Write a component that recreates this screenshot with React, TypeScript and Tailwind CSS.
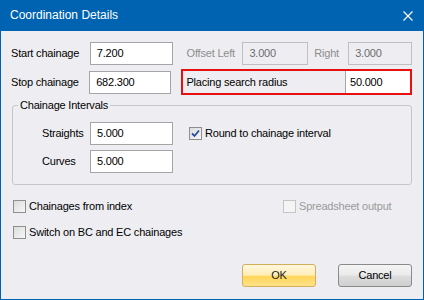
import React from 'react';

const font = { fontFamily: '"Liberation Sans", Arial, sans-serif' };

function TextBox({ value, width, disabled }: { value: string; width: string; disabled?: boolean }) {
  return (
    <div
      className={`${width} h-[23px] flex items-center pl-[6px] border ${
        disabled ? 'border-[#BFBFBF] text-[#6D6D6D] bg-transparent' : 'border-[#A5A5A5] text-black bg-white'
      }`}
    >
      {value}
    </div>
  );
}

function CheckBox({ label, checked, disabled }: { label: string; checked?: boolean; disabled?: boolean }) {
  return (
    <div className="flex items-center h-[13px]">
      <span
        className={`w-[13px] h-[13px] border flex items-center justify-center ${
          disabled
            ? 'border-[#C4C4C4] bg-[#F4F4F4]'
            : 'border-[#8E8F8F] bg-gradient-to-br from-[#DCDCDC] to-[#F7F7F7]'
        }`}
      >
        {checked && (
          <svg width="9" height="9" viewBox="0 0 9 9">
            <path d="M1 4.5 L3.5 7 L8 1.5" fill="none" stroke="#2A4C9F" strokeWidth="1.8" />
          </svg>
        )}
      </span>
      <span className={`ml-[3px] ${disabled ? 'text-[#9A9A9A]' : 'text-black'}`}>{label}</span>
    </div>
  );
}

export default function App() {
  return (
    <div
      className="w-[424px] h-[300px] flex flex-col bg-[#0063B1] text-[11px] tracking-[-0.2px] leading-[13px]"
      style={font}
    >
      {/* Title bar */}
      <div className="h-[31px] flex items-center justify-between pl-[10px] pr-[11px] shrink-0">
        <span className="text-white text-[12px] tracking-normal">Coordination Details</span>
        <svg width="10" height="10" viewBox="0 0 10 10">
          <path d="M0.5 0.5 L9.5 9.5 M9.5 0.5 L0.5 9.5" stroke="white" strokeWidth="1.2" />
        </svg>
      </div>

      {/* Body */}
      <div className="flex-1 mx-[1px] mb-[1px] bg-[#EEEEF2] flex flex-col pl-[10px] pr-[11px]">
        {/* Row 1 */}
        <div className="mt-[11px] flex items-center h-[23px]">
          <span className="w-[79px]">Start chainage</span>
          <TextBox value="7.200" width="w-[83px]" />
          <span className="ml-[14px] w-[56px] text-[#8D8D8D]">Offset Left</span>
          <TextBox value="3.000" width="w-[66px]" disabled />
          <span className="ml-[6px] w-[34px] text-[#8D8D8D]">Right</span>
          <TextBox value="3.000" width="w-[64px]" disabled />
        </div>

        {/* Row 2 */}
        <div className="mt-[4px] flex items-center h-[26px]">
          <span className="w-[79px]">Stop chainage</span>
          <TextBox value="682.300" width="w-[83px]" />
          <div className="ml-[10px] w-[233px] h-[26px] border-2 border-[#E81010] flex items-center">
            <span className="flex-1 pl-[3px]">Placing search radius</span>
            <div className="w-[65px] h-full bg-white border-l border-[#A5A5A5] flex items-center pl-[4px]">
              50.000
            </div>
          </div>
        </div>

        {/* Group */}
        <fieldset className="mt-[4px] ml-[1px] w-[400px] border border-[#C6C6C6] rounded-[3px]">
          <legend className="ml-[5px] px-[2px]">Chainage Intervals</legend>
          <div className="pl-[29px] pt-[10px] pb-[11px]">
            <div className="flex items-center h-[23px]">
              <span className="w-[48px]">Straights</span>
              <TextBox value="5.000" width="w-[83px]" />
              <div className="ml-[16px]">
                <CheckBox label="Round to chainage interval" checked />
              </div>
            </div>
            <div className="mt-[5px] flex items-center h-[23px]">
              <span className="w-[48px]">Curves</span>
              <TextBox value="5.000" width="w-[83px]" />
            </div>
          </div>
        </fieldset>

        {/* Checkboxes */}
        <div className="mt-[15px] ml-[2px] flex items-center">
          <div className="w-[270px]">
            <CheckBox label="Chainages from index" />
          </div>
          <CheckBox label="Spreadsheet output" disabled />
        </div>
        <div className="mt-[13px] ml-[2px]">
          <CheckBox label="Switch on BC and EC chainages" />
        </div>

        {/* Buttons */}
        <div className="mt-[25px] flex justify-end gap-[22px]">
          <button className="w-[74px] h-[23px] rounded-[3px] border border-[#D3AF5B] bg-[linear-gradient(#FFF7DD_0%,#FFEDB8_48%,#FFD659_55%,#FFE28A_100%)] text-[#1A1A1A] text-[11px]">
            OK
          </button>
          <button className="w-[74px] h-[23px] rounded-[3px] border border-[#8A8A8A] bg-[linear-gradient(#F4F4F4_0%,#EBEBEB_48%,#DDDDDD_52%,#CFCFCF_100%)] text-black text-[11px]">
            Cancel
          </button>
        </div>
      </div>
    </div>
  );
}
